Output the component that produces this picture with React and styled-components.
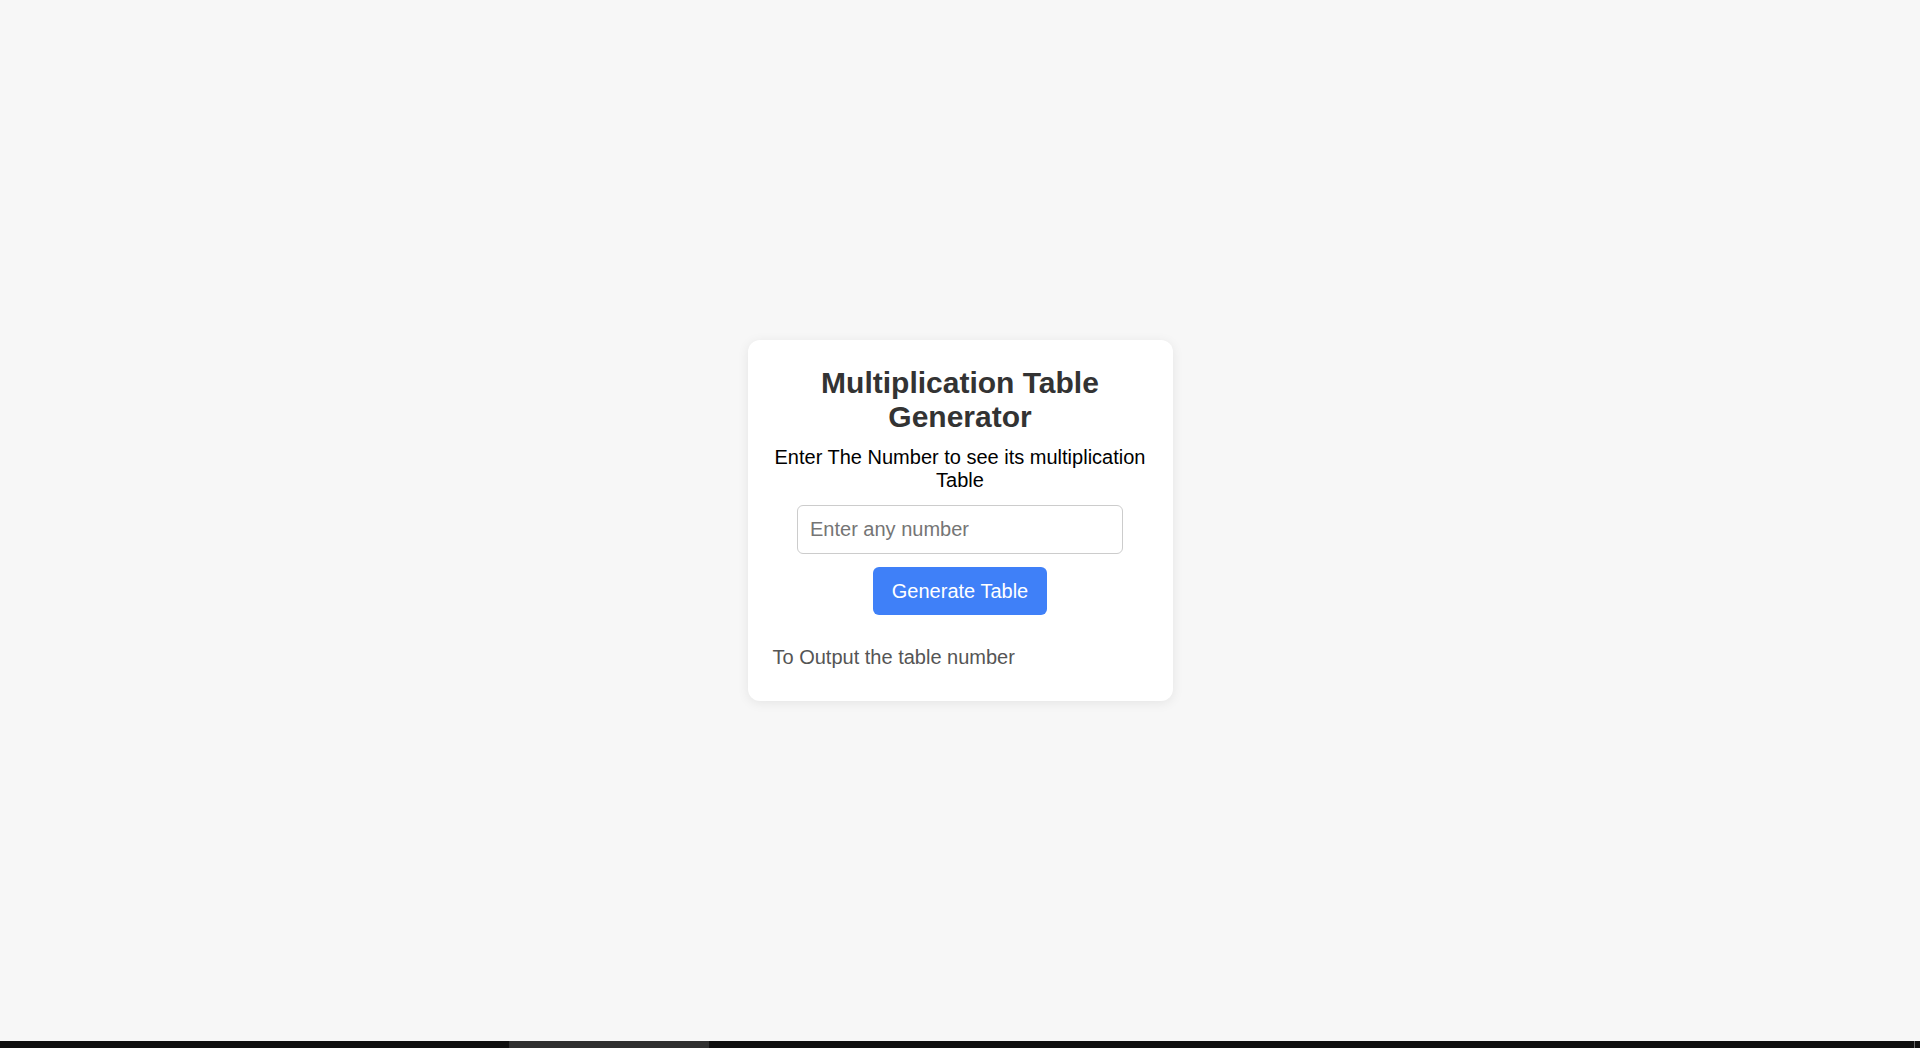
import styled, {createGlobalStyle} from "styled-components";

const GlobalStyle = createGlobalStyle`
  html, body {
    margin: 0;
    padding: 0;
    height: 100%;
    overflow: hidden;
  }
  body {
    background: #f7f7f7;
    font-family: "Liberation Sans", Arial, sans-serif;
  }
  #root {
    height: 100%;
  }
`;

const App = () => {
  return (
    <Page>
      <GlobalStyle/>
      <Main>
        <Card>
          <Title>Multiplication Table Generator</Title>
          <Subtitle>Enter The Number to see its multiplication Table</Subtitle>
          <NumberInput type="number" placeholder="Enter any number"/>
          <GenerateButton>Generate Table</GenerateButton>
          <Output>To Output the table number</Output>
        </Card>
      </Main>
      <ScrollTrack>
        <ScrollThumb/>
        <TrackEnd/>
      </ScrollTrack>
    </Page>
  )
}

export default App;

const Page = styled.div`
  display: flex;
  flex-direction: column;
  height: 100vh;
`;

const Main = styled.main`
  flex: 1;
  display: flex;
  align-items: center;
  justify-content: center;
`;

const Card = styled.div`
  width: 425px;
  box-sizing: border-box;
  background: #fff;
  border-radius: 12px;
  box-shadow: 0 2px 12px rgba(0, 0, 0, 0.08);
  padding: 26px 25px 32px;
  display: flex;
  flex-direction: column;
  align-items: center;
  text-align: center;
`;

const Title = styled.h1`
  margin: 0 0 12px;
  font-size: 30px;
  line-height: 34px;
  font-weight: 700;
  color: #333;
`;

const Subtitle = styled.p`
  margin: 0 0 13px;
  font-size: 20px;
  line-height: 23px;
  color: #000;
`;

const NumberInput = styled.input`
  width: 326px;
  height: 49px;
  box-sizing: border-box;
  padding: 0 12px;
  border: 1px solid #ccc;
  border-radius: 6px;
  font-family: "Liberation Sans", Arial, sans-serif;
  font-size: 20px;
  color: #333;
  outline: none;

  &::placeholder {
    color: #757575;
  }
`;

const GenerateButton = styled.button`
  margin-top: 13px;
  height: 48px;
  padding: 0 18.5px;
  border: none;
  border-radius: 6px;
  background: #3f80f8;
  color: #fff;
  font-family: "Liberation Sans", Arial, sans-serif;
  font-size: 20px;
  cursor: pointer;
`;

const Output = styled.div`
  align-self: stretch;
  margin-top: 31px;
  text-align: left;
  font-size: 20px;
  line-height: 23px;
  color: #555;
`;

const ScrollTrack = styled.div`
  height: 7px;
  background: #0f0f0f;
  display: flex;
  align-items: stretch;
`;

const ScrollThumb = styled.div`
  width: 200px;
  margin-left: 509px;
  background: #2f2f2f;
`;

const TrackEnd = styled.div`
  width: 1px;
  margin-left: auto;
  margin-right: 5px;
  background: #6a6a6a;
`;
